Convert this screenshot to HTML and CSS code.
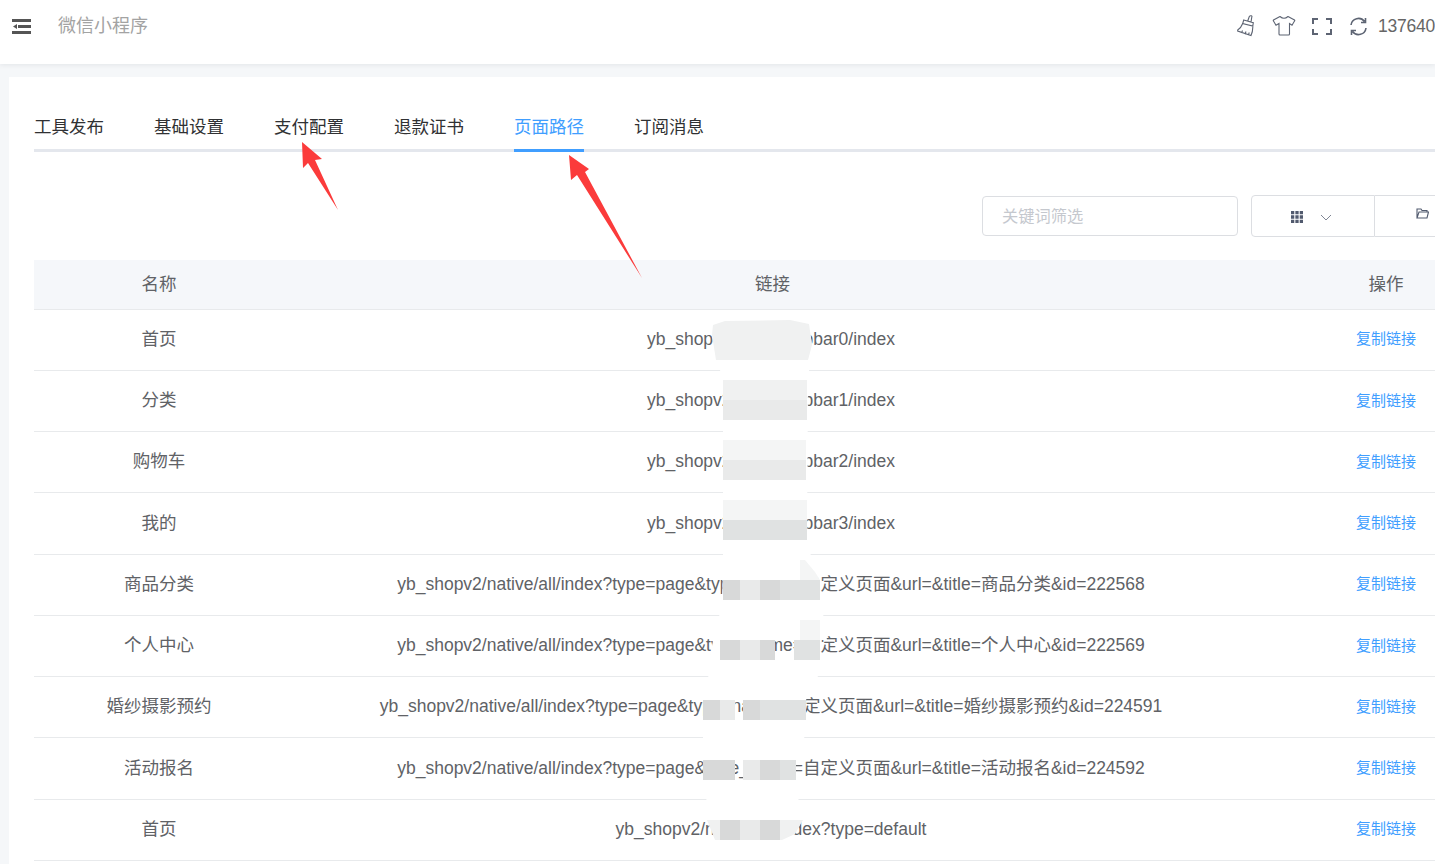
FILE: index.html
```html
<!DOCTYPE html>
<html lang="zh-CN">
<head>
<meta charset="utf-8">
<title>微信小程序</title>
<link rel="stylesheet" href="styles.css">
</head>
<body>
<header class="topbar">
  <div class="topbar-left">
    <svg class="menu-icon" viewBox="0 0 19 15"><path d="M0 0h19v3H0zM0 12h19v3H0zM6 6h13v3H6zM1 7.500 5 5v5z"/></svg>
    <span class="app-title">微信小程序</span>
  </div>
  <div class="topbar-right">
    <svg class="tool-icon brush" viewBox="-1 0 20 22"><path d="M9.700 6 11.300 1.500Q12 .5 13.200 .8T13.700 2.500L13 7.300M5.700 5 15.300 7.700 14.800 11 4.700 8.500ZM4.700 8.500Q3 13 -.3 15L-.3 16 13 20.500Q15 16 14.800 11M3.500 18 4.500 15.500M7 19.200 8 16.500M10.300 20 11.300 17.500"/></svg>
    <svg class="tool-icon shirt" viewBox="0 0 24 20"><path d="M8 .5 1.500 4Q1 4.500 1.500 5L4 9.200 7 7.500V18Q7 19 8 19H16.500Q17.500 19 17.500 18V7.500L20 9.200 22.500 5Q23 4.500 22.500 4L16 .5Q12 4 8 .5Z"/></svg>
    <svg class="tool-icon full" viewBox="0 0 20 17"><path d="M1 6V1H6M14 1H19V6M1 11V16H6M14 16H19V11"/></svg>
    <svg class="tool-icon refresh" viewBox="0 0 19 19"><path d="M2 8A7.500 7.500 0 0 1 15.500 4.500M17 11A7.500 7.500 0 0 1 3.500 14.500M16.500 1V5.500H12M2.500 18V13.500H7"/></svg>
    <span class="user-name">137640</span>
  </div>
</header>
<main class="content">
  <section class="card">
    <nav class="tabs">
      <a class="tab">工具发布</a>
      <a class="tab">基础设置</a>
      <a class="tab">支付配置</a>
      <a class="tab">退款证书</a>
      <a class="tab active">页面路径</a>
      <a class="tab">订阅消息</a>
    </nav>
    <div class="toolbar">
      <div class="search">关键词筛选</div>
      <div class="btn-group">
        <button class="btn btn-select">
          <svg class="grid-icon" viewBox="0 0 11 11"><path d="M0 0h3v3H0zM4 0h3v3H4zM8 0h3v3H8zM0 4h3v3H0zM4 4h3v3H4zM8 4h3v3H8zM0 8h3v3H0zM4 8h3v3H4zM8 8h3v3H8z"/></svg>
          <svg class="chev-icon" viewBox="0 0 12 7"><path d="M1 1 6 6 11 1"/></svg>
        </button>
        <button class="btn btn-folder">
          <svg class="folder-icon" viewBox="0 0 13 11"><path d="M1 10V1H5L6 2.500H11V4M1 10H11L12.500 4H3L1 10Z"/></svg>
        </button>
      </div>
    </div>
    <div class="table">
      <div class="row head"><div>名称</div><div class="head-link">链接</div><div>操作</div></div>
      <div class="row"><div>首页</div><div>yb_shopv2/pages/tabbar0/index</div><div><a class="copy">复制链接</a></div></div>
      <div class="row"><div>分类</div><div>yb_shopv2/pages/tabbar1/index</div><div><a class="copy">复制链接</a></div></div>
      <div class="row"><div>购物车</div><div>yb_shopv2/pages/tabbar2/index</div><div><a class="copy">复制链接</a></div></div>
      <div class="row"><div>我的</div><div>yb_shopv2/pages/tabbar3/index</div><div><a class="copy">复制链接</a></div></div>
      <div class="row"><div>商品分类</div><div>yb_shopv2/native/all/index?type=page&amp;type_name=自定义页面&amp;url=&amp;title=商品分类&amp;id=222568</div><div><a class="copy">复制链接</a></div></div>
      <div class="row"><div>个人中心</div><div>yb_shopv2/native/all/index?type=page&amp;type_name=自定义页面&amp;url=&amp;title=个人中心&amp;id=222569</div><div><a class="copy">复制链接</a></div></div>
      <div class="row"><div>婚纱摄影预约</div><div>yb_shopv2/native/all/index?type=page&amp;type_name=自定义页面&amp;url=&amp;title=婚纱摄影预约&amp;id=224591</div><div><a class="copy">复制链接</a></div></div>
      <div class="row"><div>活动报名</div><div>yb_shopv2/native/all/index?type=page&amp;type_name=自定义页面&amp;url=&amp;title=活动报名&amp;id=224592</div><div><a class="copy">复制链接</a></div></div>
      <div class="row"><div>首页</div><div>yb_shopv2/native/all/index?type=default</div><div><a class="copy">复制链接</a></div></div>
    </div>
  </section>
</main>
<svg class="overlay" viewBox="0 0 1435 864">
  <path class="wipe" d="M713 325 725 321 790 320 809 324 812 345 808 380 807 540 812 560 818 572H723V380L717 360 712 335Z"/>
  <path class="wipe" d="M723 572H815L821 600 827 640H715L722 600Z"/>
  <path class="wipe" d="M713 640H720V660H710Z"/>
  <path class="wipe" d="M712 660H826L806 700H703Z"/>
  <path class="wipe" d="M703 720H806L802 760H703Z"/>
  <path class="wipe" d="M703 780H797L800 820H710Z"/>
  <path class="g1" d="M713 325 725 321 790 320 809 324 812 345 808 360H716L712 335Z"/>
  <rect class="g1" x="723" y="380" width="84" height="20"/>
  <rect class="g2" x="723" y="400" width="84" height="20"/>
  <rect class="g0" x="723" y="440" width="83" height="20"/>
  <rect class="g2" x="723" y="460" width="83" height="20"/>
  <rect class="g0" x="723" y="500" width="84" height="20"/>
  <rect class="g3" x="723" y="520" width="84" height="20"/>
  <path class="g0" d="M800 580V560H805L815 572 820 580Z"/>
  <rect class="g4" x="723" y="580" width="17" height="20"/>
  <rect class="g2" x="740" y="580" width="20" height="20"/>
  <rect class="g4" x="760" y="580" width="20" height="20"/>
  <rect class="g3" x="780" y="580" width="40" height="20"/>
  <rect class="g0" x="800" y="620" width="20" height="20"/>
  <rect class="g4" x="720" y="640" width="20" height="20"/>
  <rect class="g2" x="740" y="640" width="20" height="20"/>
  <rect class="g4" x="760" y="640" width="15" height="20"/>
  <rect class="g3" x="794" y="640" width="26" height="20"/>
  <rect class="g4" x="703" y="700" width="17" height="20"/>
  <rect class="g2" x="720" y="700" width="15" height="20"/>
  <rect class="g4" x="743" y="700" width="17" height="20"/>
  <rect class="g3" x="760" y="700" width="46" height="20"/>
  <rect class="g4" x="703" y="760" width="32" height="20"/>
  <rect class="g2" x="743" y="760" width="17" height="20"/>
  <rect class="g4" x="760" y="760" width="20" height="20"/>
  <rect class="g3" x="780" y="760" width="16" height="20"/>
  <path class="g1" d="M707 820H720V840H715Z"/>
  <rect class="g4" x="720" y="820" width="20" height="20"/>
  <rect class="g2" x="740" y="820" width="20" height="20"/>
  <rect class="g4" x="760" y="820" width="20" height="20"/>
  <path class="g1" d="M780 820H803L795 834 782 840H780Z"/>
  <path class="arrow" d="M302 142 322 159 315 160 338 210 308 163 303 168Z"/>
  <path class="arrow" d="M569 155 589 169 585 172 642 278 577 175 571 180Z"/>
</svg>
</body>
</html>
```
FILE: styles.css
```css
* { box-sizing: border-box; }
html, body { margin: 0; height: 864px; overflow: hidden; }
body {
  position: relative;
  background: #f5f7f9;
  color: #606266;
  font-family: "Liberation Sans", "Noto Sans CJK SC", sans-serif;
  font-size: 17.5px;
}
.topbar {
  height: 64px;
  background: #fff;
  box-shadow: 0 1px 5px rgba(0, 21, 41, .08);
  display: flex;
  justify-content: space-between;
  padding: 0 0 12px 12px;
  align-items: center;
}
.topbar-left { display: flex; align-items: center; }
.menu-icon { width: 19px; height: 15px; fill: #555; }
.app-title { margin: 0 0 0 27px; color: #a3a3a3; font-size: 18px; line-height: 24px; }
.topbar-right { display: flex; align-items: center; width: 198px; white-space: nowrap; flex: none; }
.tool-icon { fill: none; stroke: #5d6473; stroke-width: 1.1; flex: none; }
.brush { width: 20px; height: 22px; margin-right: 15px; }
.shirt { width: 24px; height: 20px; margin-right: 16px; }
.full { width: 20px; height: 17px; margin-right: 17px; stroke-width: 2; }
.refresh { width: 19px; height: 19px; margin-right: 10px; stroke-width: 1.6; }
.user-name { color: #666; font-size: 17.5px; letter-spacing: -.25px; }
.content { padding: 13px 0 0 9px; width: 1600px; }
.card { background: #fff; padding: 25px 25px 0; height: 800px; }
.tabs {
  display: flex;
  gap: 50px;
  border-bottom: 3px solid #e4e7ed;
  height: 50px;
  width: 1480px;
}
.tab { height: 50px; line-height: 51px; color: #303133; }
.tab.active { color: #409eff; border-bottom: 3px solid #409eff; }
.toolbar {
  width: 1480px;
  height: 108px;
  padding: 43px 45px 0 0;
  display: flex;
  justify-content: flex-end;
  align-items: flex-start;
  gap: 13px;
}
.search {
  margin-top: 1px;
  width: 256px;
  height: 40px;
  border: 1px solid #dcdee2;
  border-radius: 4px;
  padding-left: 19px;
  font-size: 16.25px;
  line-height: 39px;
  color: #c5c8ce;
}
.btn-group { display: flex; }
.btn {
  height: 42px;
  background: #fff;
  border: 1px solid #dcdee2;
  display: flex;
  align-items: center;
  padding: 0;
}
.btn-select { width: 124px; border-radius: 4px 0 0 4px; padding-left: 39px; }
.btn-folder { width: 94px; border-left: 0; border-radius: 0 4px 4px 0; padding-left: 41px; }
.grid-icon { width: 12px; height: 12px; fill: #515a6e; margin-top: 1px; }
.chev-icon { width: 12px; height: 7px; margin: 3px 0 0 17px; fill: none; stroke: #808695; stroke-width: 1; }
.folder-icon { width: 13px; height: 11px; margin-top: -5px; fill: none; stroke: #515a6e; stroke-width: 1.1; }
.table { width: 1480px; }
.row {
  display: grid;
  grid-template-columns: 250px 974px 256px;
  height: 61.25px;
  align-items: center;
  text-align: center;
  line-height: 22px;
  border-bottom: 1px solid #e8eaec;
}
.row > div { margin-top: -1.6px; }
.row.head { height: 49.6px; background: #f5f7fa; }
.row.head > div { margin-top: 0; }
.head-link { padding-left: 3px; }
.copy { color: #409eff; font-size: 15px; }
.overlay {
  position: absolute;
  left: 0;
  top: 0;
  width: 1435px;
  height: 864px;
  pointer-events: none;
}
.wipe { fill: #fff; }
.g0 { fill: #f4f5f5; }
.g1 { fill: #f0f1f1; }
.g2 { fill: #e9eaea; }
.g3 { fill: #e0e2e2; }
.g4 { fill: #d8d9d9; }
.arrow { fill: #fb3b3b; }
```
